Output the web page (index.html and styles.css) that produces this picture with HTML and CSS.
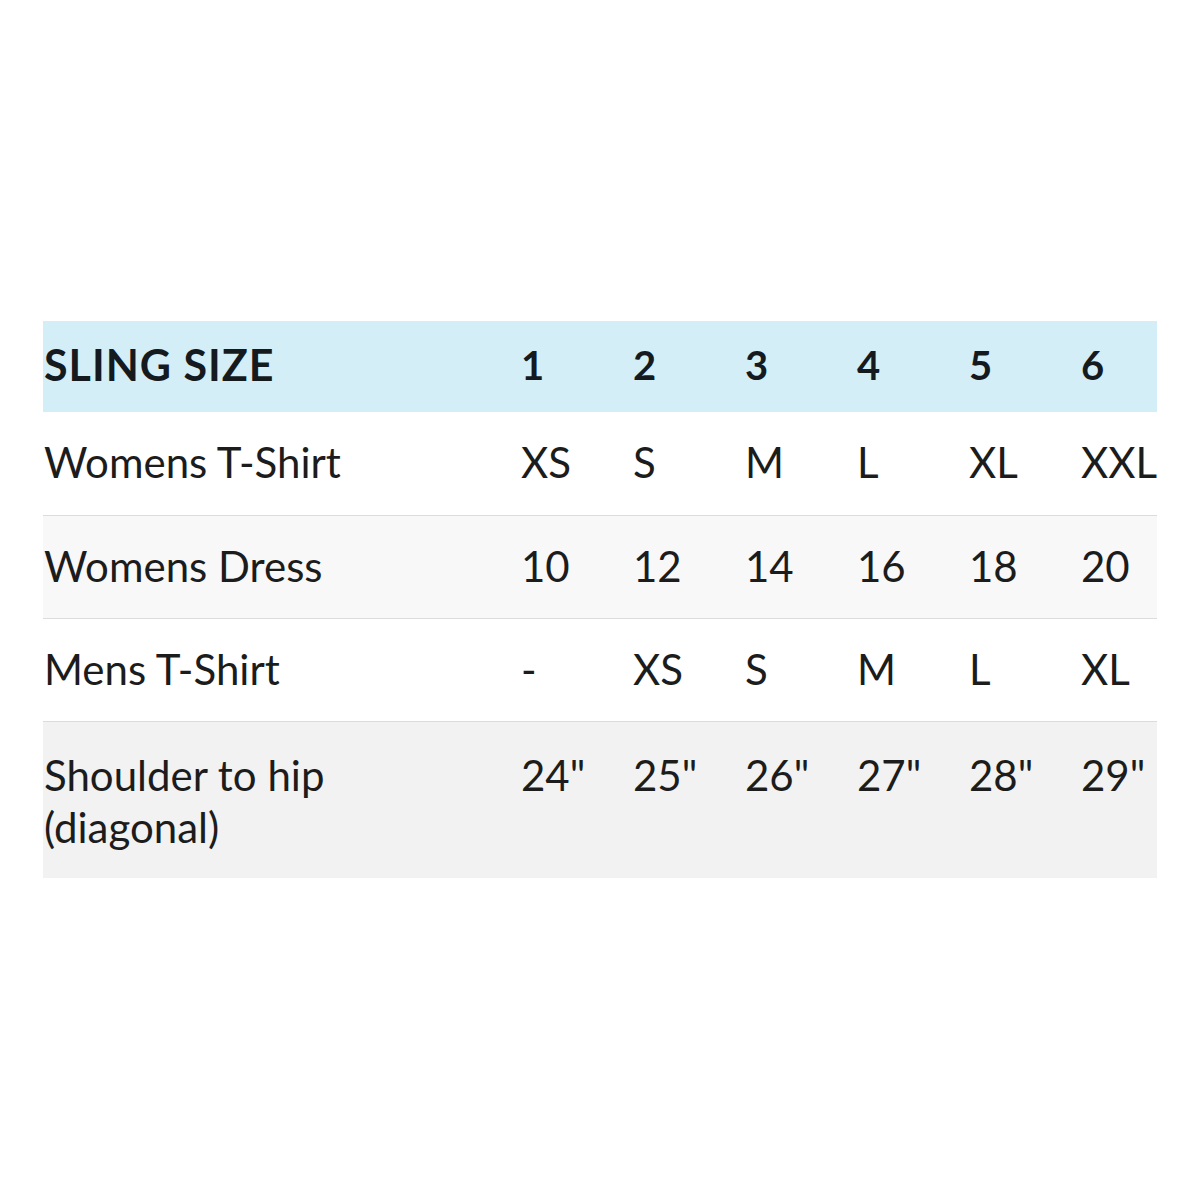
FILE: index.html
```html
<!DOCTYPE html>
<html>
<head>
<meta charset="utf-8">
<link rel="stylesheet" href="styles.css">
</head>
<body>
<div class="page">
  <table class="sizes">
    <colgroup>
      <col class="c-label"><col class="c-val"><col class="c-val"><col class="c-val"><col class="c-val"><col class="c-val"><col class="c-last">
    </colgroup>
    <thead>
      <tr class="head">
        <th>SLING SIZE</th><th>1</th><th>2</th><th>3</th><th>4</th><th>5</th><th>6</th>
      </tr>
    </thead>
    <tbody>
      <tr class="row">
        <td>Womens T-Shirt</td><td>XS</td><td>S</td><td>M</td><td>L</td><td>XL</td><td>XXL</td>
      </tr>
      <tr class="row alt">
        <td>Womens Dress</td><td>10</td><td>12</td><td>14</td><td>16</td><td>18</td><td>20</td>
      </tr>
      <tr class="row">
        <td>Mens T-Shirt</td><td>-</td><td>XS</td><td>S</td><td>M</td><td>L</td><td>XL</td>
      </tr>
      <tr class="row last">
        <td>Shoulder to hip<br>(diagonal)</td><td>24"</td><td>25"</td><td>26"</td><td>27"</td><td>28"</td><td>29"</td>
      </tr>
    </tbody>
  </table>
</div>
</body>
</html>
```

FILE: styles.css
```css
html, body {
  margin: 0;
  padding: 0;
  background: #ffffff;
}
.page {
  width: 1200px;
  height: 1200px;
  padding: 321px 0 0 43px;
  box-sizing: border-box;
}
.sizes {
  border-collapse: collapse;
  table-layout: fixed;
  width: 1114px;
  font-family: Lato, "Open Sans", sans-serif;
  color: #1c1c1c;
}
.c-label { width: 478px; }
.c-val { width: 112px; }
.c-last { width: 76px; }
.sizes th, .sizes td {
  text-align: left;
  vertical-align: top;
  padding: 0 0 0 1px;
  white-space: nowrap;
  line-height: 52px;
}
.sizes th:first-child, .sizes td:first-child { padding-left: 1px; }
.sizes th + th, .sizes td + td { padding-left: 0; }
.head th {
  background: #d4eef8;
  font-weight: 700;
  font-size: 40px;
  height: 91px;
  padding-top: 18px;
  box-sizing: border-box;
  color: #151a1e;
}
.head th:first-child {
  font-size: 43px;
  letter-spacing: 1px;
}
.row td {
  font-size: 42px;
  font-weight: 400;
  height: 103px;
  padding-top: 24px;
  box-sizing: border-box;
  border-bottom: 1px solid #dcdcdc;
}
.row.alt td { background: #f8f8f8; }
.row.last td {
  background: #f2f2f2;
  height: 157px;
  padding-top: 27px;
  border-bottom: none;
}
```
